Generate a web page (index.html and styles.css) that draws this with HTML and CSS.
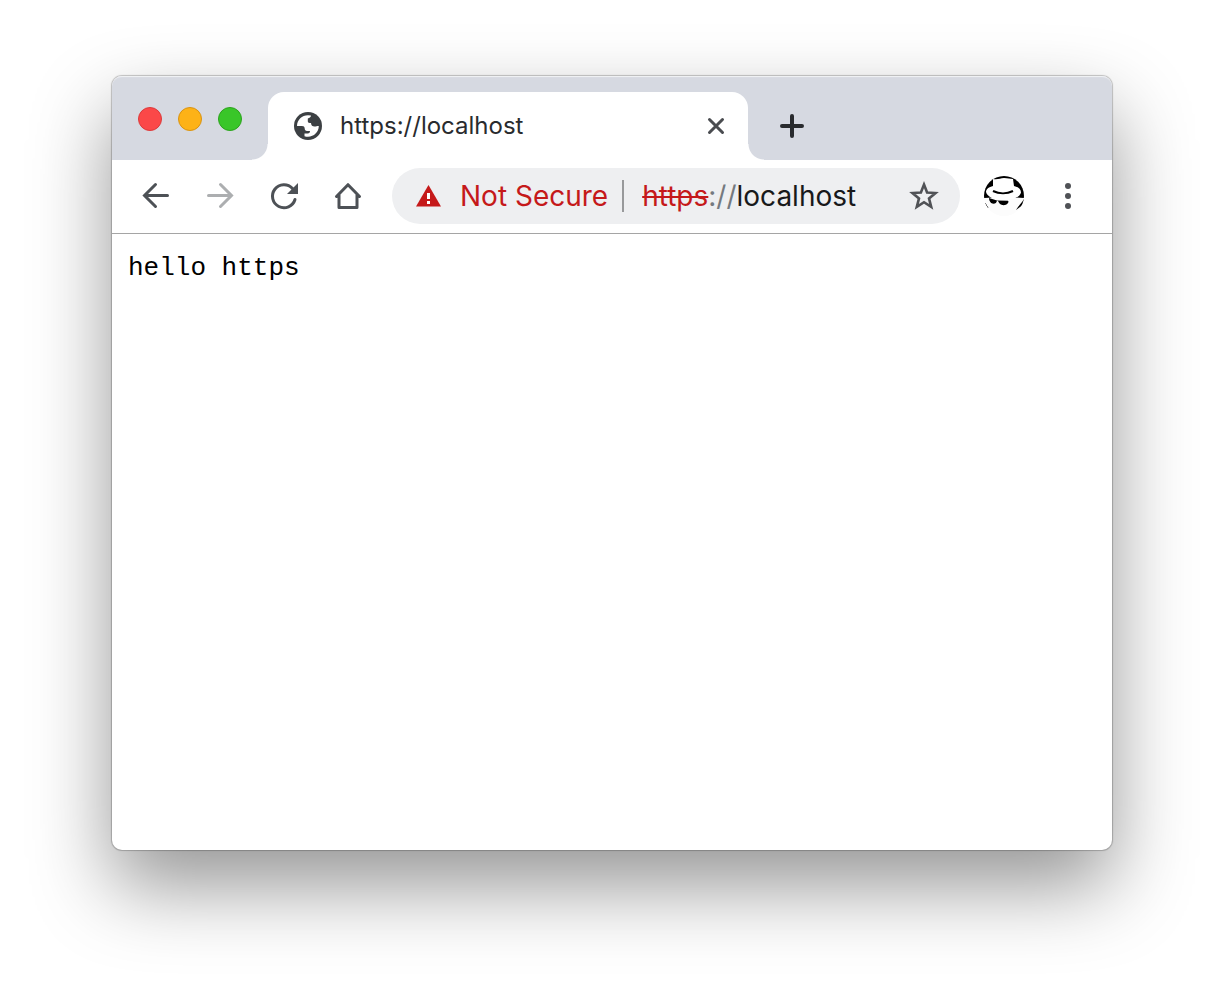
FILE: index.html
```html
<!DOCTYPE html>
<html lang="en">
<head>
    <meta charset="UTF-8">
    <meta name="viewport" content="width=device-width, initial-scale=1.0">
    <title>https://localhost</title>
    <link rel="stylesheet" href="styles.css">
</head>
<body>
    <div class="window">
        <header class="tab-strip">
            <div class="lights">
                <button class="light red" aria-label="Close window"></button>
                <button class="light yellow" aria-label="Minimize window"></button>
                <button class="light green" aria-label="Zoom window"></button>
            </div>
            <div class="tab">
                <svg width="28" height="28" viewBox="0 0 28 28">
                    <circle cx="14" cy="14" r="14" fill="#3c4043"/>
                    <path fill="#fff" d="M3 14C3 8 8 3.300 14 3.300l3 .2C16.800 5.500 15.500 6 13.800 6.500v2.700c0 1.500 1.500 1.800 3.200 1.800 0 2.500 1.500 3.500 3.500 3.500 1.500 0 2.500-.5 4.300-.5C24.700 20 20 24.700 14 24.700c-1.200 0-2.300-.1-3.500-.5v-2.700h3.200c1.700 0 2.300-1 2.300-2.500h-3c-1.500 0-2.300-1-2.300-2.500 0-1.700-1-2.500-2.700-2.500z"/>
                </svg>
                <span class="tab-title">https://localhost</span>
                <button class="tab-close" aria-label="Close tab">
                    <svg width="24" height="24" viewBox="0 0 24 24">
                        <path d="M5.500 5.500l13 13m0-13l-13 13" stroke="#4a4c50" stroke-width="3" stroke-linecap="round"/>
                    </svg>
                </button>
            </div>
            <button class="new-tab" aria-label="New tab">
                <svg width="24" height="24" viewBox="0 0 24 24">
                    <path d="M12 2v20M2 12h20" stroke="#292b2e" stroke-width="4" stroke-linecap="round"/>
                </svg>
            </button>
        </header>

        <nav class="toolbar">
            <button class="tool" aria-label="Back">
                <svg width="32" height="32" viewBox="0 0 32 32">
                    <path d="M27.500 15.500H5M15.500 4.500l-11 11 11 11" fill="none" stroke="#4d5156" stroke-width="3" stroke-linecap="round"/>
                </svg>
            </button>
            <button class="tool" aria-label="Forward" disabled>
                <svg width="32" height="32" viewBox="0 0 32 32">
                    <path d="M4.500 15.500H27M16.500 4.500l11 11-11 11" fill="none" stroke="#acaeb0" stroke-width="3" stroke-linecap="round"/>
                </svg>
            </button>
            <button class="tool" aria-label="Reload">
                <svg width="32" height="32" viewBox="0 0 32 32">
                    <path d="M27 19.500A11.500 11.500 0 1 1 24.500 8.500" fill="none" stroke="#4d5156" stroke-width="3" stroke-linecap="round"/>
                    <path d="M30 3v11H19z" fill="#4d5156"/>
                </svg>
            </button>
            <button class="tool" aria-label="Home">
                <svg width="32" height="32" viewBox="0 0 32 32">
                    <path d="M4.500 16.500L16 4.700l11.500 11.800M7 15v12.500h18V15" fill="none" stroke="#4d5156" stroke-width="3" stroke-linecap="round" stroke-linejoin="round"/>
                </svg>
            </button>

            <div class="address">
                <button class="security">
                    <svg width="26" height="24" viewBox="0 0 26 24">
                        <path d="M12.500 1L25 22.500H0z" fill="#c5191a"/>
                        <path d="M11 9h3v6h-3zM11 17h3v3h-3z" fill="#fff"/>
                    </svg>
                    <span>Not Secure</span>
                </button>
                <div class="url" role="textbox" contenteditable="true" spellcheck="false" aria-label="Address"><span class="scheme">https</span><span class="slashes">://</span>localhost</div>
                <button class="star" aria-label="Bookmark this page">
                    <svg width="32" height="32" viewBox="0 0 32 32">
                        <path d="M16 4.500l3.100 8 8.400.5-6.500 5.400 2.200 8.400L16 22.200l-7.200 4.600 2.200-8.400L4.500 13l8.400-.5z" fill="none" stroke="#505256" stroke-width="2.600"/>
                    </svg>
                </button>
            </div>

            <button class="avatar" aria-label="Profile">
                <svg width="40" height="40" viewBox="0 0 40 40">
                    <defs>
                        <clipPath id="round"><circle cx="20" cy="20" r="20"/></clipPath>
                    </defs>
                    <g clip-path="url(#round)">
                        <path d="M0 0h40v22H0z" fill="#000"/>
                        <path d="M0 22l20-1 20 1v18H0z" fill="#fcfcfc"/>
                        <!-- hat -->
                        <path d="M9 3c5 1 7-1 11-1s6 1 9 1l1 7C34 11 37 13 37 16.500 36 21 29 24 20 24S3 21 2 16c0-3 3-5 7-6z" fill="#fff"/>
                        <path d="M9 15c6 3 14 3 20 0" fill="none" stroke="#000" stroke-width="2"/>
                        <!-- glasses -->
                        <path d="M5 22l8 2.500 11 .2c1.500 1.500-1 4.500-4.500 4.500-3 0-4.500-2-5.500-4.200l-1-.3c-.5 2-1.500 3-3.500 3C7 27.700 5 25 5 22z" fill="#000"/>
                        <path d="M41 21c-2 5-6 8-9 13l8-6z" fill="#000"/>
                        <path d="M1 27l3 5" stroke="#000"/>
                    </g>
                </svg>
            </button>
            <button class="tool" aria-label="Menu">
                <svg width="32" height="32" viewBox="0 0 32 32" fill="#505256">
                    <circle cx="16" cy="6" r="3"/>
                    <circle cx="16" cy="16" r="3"/>
                    <circle cx="16" cy="26" r="3"/>
                </svg>
            </button>
        </nav>

        <main class="page">
            <pre>hello https</pre>
        </main>
    </div>
</body>
</html>
```
FILE: styles.css
```css
* {
    margin: 0;
    padding: 0;
    box-sizing: border-box;
}

body {
    display: flex;
    min-height: 100vh;
    padding: 76px 112px 148px;
    background: #fff;
    font-family: Inter, "Liberation Sans", sans-serif;
}

button {
    border: none;
    background: none;
    font: inherit;
    color: inherit;
}

svg {
    display: block;
}

.window {
    flex: 1;
    display: flex;
    flex-direction: column;
    border-radius: 10px;
    background: #fff;
    box-shadow: 0 0 1px 1px rgba(0, 0, 0, 0.22), 0 36px 80px rgba(0, 0, 0, 0.42);
}

/* tabs */
.tab-strip {
    display: flex;
    height: 84px;
    padding-top: 16px;
    background: #d6d9e1;
    border-radius: 10px 10px 0 0;
    box-shadow: inset 0 2px 1px -1px #f2f3f6;
}

.lights {
    display: flex;
    gap: 16px;
    padding: 15px 26px 0;
}

.light {
    width: 24px;
    height: 24px;
    border-radius: 50%;
}

.red {
    background: #fb4848;
    border: 1px solid #dc3a3b;
}

.yellow {
    background: #fdb217;
    border: 1px solid #d99312;
}

.green {
    background: #39c629;
    border: 1px solid #2ca31d;
}

.tab {
    position: relative;
    display: flex;
    align-items: center;
    width: 480px;
    padding: 0 20px 0 26px;
    background: #fff;
    border-radius: 16px 16px 0 0;
}

.tab::before,
.tab::after {
    content: "";
    position: absolute;
    bottom: 0;
    width: 16px;
    height: 16px;
}

.tab::before {
    right: 100%;
    background: radial-gradient(circle at 0 0, transparent 15px, #fff 16px);
}

.tab::after {
    left: 100%;
    background: radial-gradient(circle at 100% 0, transparent 15px, #fff 16px);
}

.tab-title {
    flex: 1;
    margin-left: 18px;
    font-size: 24px;
    line-height: 32px;
    color: #292b2e;
}

.new-tab {
    padding: 0 32px;
}

/* toolbar */
.toolbar {
    display: flex;
    align-items: center;
    padding: 8px 12px 9px;
    border-bottom: 1px solid #a5a5a5;
}

.tool {
    padding: 12px 16px;
}

.address {
    flex: 1;
    display: flex;
    align-items: center;
    height: 56px;
    margin-left: 12px;
    padding: 0 20px 0 24px;
    border-radius: 28px;
    background: #eeeff1;
    font-size: 28px;
    line-height: 32px;
}

.security {
    display: flex;
    align-items: center;
    gap: 18px;
    padding-right: 14px;
    border-right: 2px solid #98999b;
    color: #c5191a;
}

.url {
    flex: 1;
    padding-left: 18px;
    color: #18191b;
    outline: none;
}

.scheme {
    color: #c5191a;
    text-decoration: line-through;
}

.slashes {
    color: #757a80;
}

.avatar {
    margin: 0 12px 0 24px;
}

/* content */
.page {
    padding: 16px;
}

.page pre {
    font-family: "Liberation Mono", monospace;
    font-size: 26px;
    line-height: 36px;
    color: #000;
}
```
